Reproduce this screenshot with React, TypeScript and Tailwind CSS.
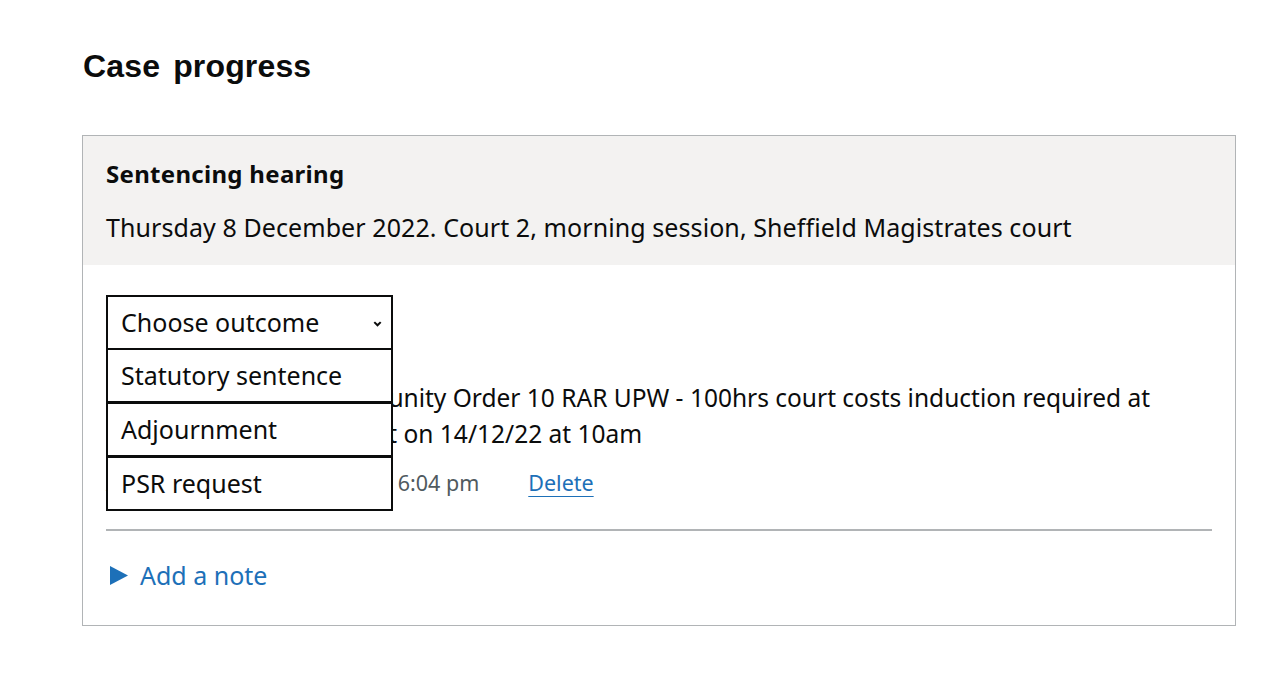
const outcomes = ['Statutory sentence', 'Adjournment', 'PSR request']

function OutcomeSelect() {
  return (
    <div className="relative w-[287px]">
      <div className="flex h-[55px] items-center justify-between border-2 border-[#0b0c0c] bg-white pl-[13px] pr-[8px]">
        <span>Choose outcome</span>
        <svg width="11" height="11" viewBox="0 0 12 12" className="mt-[2px]">
          <path d="M2.5 4.5 6 8l3.5-3.5" fill="none" stroke="#0b0c0c" strokeWidth="2.2" />
        </svg>
      </div>
      <ul className="absolute left-0 top-[53px] z-10 w-[287px]">
        {outcomes.map((o) => (
          <li
            key={o}
            className="-mt-[1px] flex h-[55px] items-center border-2 border-[#0b0c0c] bg-white pl-[13px] first:mt-0"
          >
            {o}
          </li>
        ))}
      </ul>
    </div>
  )
}

export default function App() {
  return (
    <div
      className="min-h-[676px] bg-white pl-[82px] pr-[42px] pt-[46px] text-[#0b0c0c]"
      style={{ fontFamily: '"Noto Sans", Arial, sans-serif' }}
    >
      <h1
        className="mb-[49px] pl-[1px] text-[32px] font-bold leading-[40px] tracking-[0.15px] [word-spacing:4px]"
        style={{ fontFamily: '"Liberation Sans", Arial, sans-serif' }}
      >
        Case progress
      </h1>

      <section className="w-[1154px] border border-[#b1b4b6]">
        <div className="bg-[#f3f2f1] px-[23px] pb-[21px] pt-[22px]">
          <h2 className="text-[24px] font-bold leading-[32px] tracking-[0.3px]">Sentencing hearing</h2>
          <p className="mt-[20px] text-[25px] leading-[34px] tracking-[0.08px]">
            Thursday 8 December 2022. Court 2, morning session, Sheffield Magistrates court
          </p>
        </div>

        <div className="px-[23px] pb-[34px] pt-[30px] text-[25px]">
          <OutcomeSelect />

          <p className="mt-[30px] text-[24.5px] leading-[36px]">
            Sentence passed: Community Order 10 RAR UPW - 100hrs court costs induction required at
            <br />
            Sheffield Probation Court on 14/12/22 at 10am
          </p>
          <div className="mt-[16px] flex items-center gap-[49px] text-[21.5px] leading-[30px]">
            <span className="text-[#505a5f]">Added 08 December 2022 at 6:04 pm</span>
            <a href="#" className="text-[#1d70b8] underline decoration-[1px] underline-offset-[5px]">
              Delete
            </a>
          </div>

          <hr className="mt-[31px] border-t-2 border-[#b1b4b6]" />

          <details className="mt-[28px]">
            <summary className="flex cursor-pointer list-none items-center gap-[12px] pl-[4px] leading-[32px] text-[#1d70b8]">
              <svg width="18" height="19" viewBox="0 0 18 19">
                <path d="M0 0 18 9.5 0 19Z" fill="#1d70b8" />
              </svg>
              Add a note
            </summary>
          </details>
        </div>
      </section>
    </div>
  )
}
